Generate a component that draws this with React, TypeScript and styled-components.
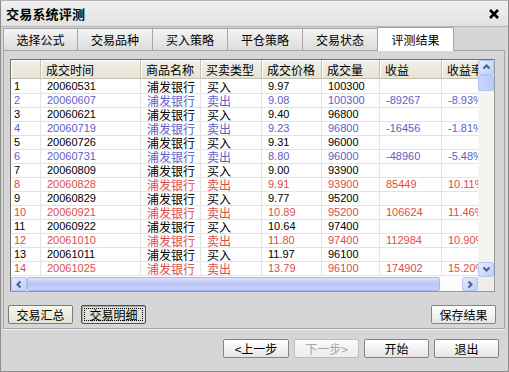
import * as React from 'react'
import styled, { createGlobalStyle, css } from 'styled-components'

/**
 * Data
 */

type Trade = {
    no: number
    date: string
    side: '买入' | '卖出'
    price: string
    volume: string
    gain?: string
    rate?: string
}

const trades: Trade[] = [
    { no: 1, date: '20060531', side: '买入', price: '9.97', volume: '100300' },
    { no: 2, date: '20060607', side: '卖出', price: '9.08', volume: '100300', gain: '-89267', rate: '-8.93%' },
    { no: 3, date: '20060621', side: '买入', price: '9.40', volume: '96800' },
    { no: 4, date: '20060719', side: '卖出', price: '9.23', volume: '96800', gain: '-16456', rate: '-1.81%' },
    { no: 5, date: '20060726', side: '买入', price: '9.31', volume: '96000' },
    { no: 6, date: '20060731', side: '卖出', price: '8.80', volume: '96000', gain: '-48960', rate: '-5.48%' },
    { no: 7, date: '20060809', side: '买入', price: '9.00', volume: '93900' },
    { no: 8, date: '20060828', side: '卖出', price: '9.91', volume: '93900', gain: '85449', rate: '10.11%' },
    { no: 9, date: '20060829', side: '买入', price: '9.77', volume: '95200' },
    { no: 10, date: '20060921', side: '卖出', price: '10.89', volume: '95200', gain: '106624', rate: '11.46%' },
    { no: 11, date: '20060922', side: '买入', price: '10.64', volume: '97400' },
    { no: 12, date: '20061010', side: '卖出', price: '11.80', volume: '97400', gain: '112984', rate: '10.90%' },
    { no: 13, date: '20061011', side: '买入', price: '11.97', volume: '96100' },
    { no: 14, date: '20061025', side: '卖出', price: '13.79', volume: '96100', gain: '174902', rate: '15.20%' },
]

const tabs = ['选择公式', '交易品种', '买入策略', '平仓策略', '交易状态', '评测结果']
const headers = ['', '成交时间', '商品名称', '买卖类型', '成交价格', '成交量', '收益', '收益率']

const rowTone = (t: Trade): Tone => {
    if (t.side === '买入') return 'plain'
    return t.gain && t.gain.startsWith('-') ? 'loss' : 'gain'
}

/**
 * Icons
 */

const Chevron = ({ dir }: { dir: 'up' | 'down' | 'left' | 'right' }) => {
    const paths = {
        up: 'M1.5 5.5 L4.5 2.5 L7.5 5.5',
        down: 'M1.5 2.5 L4.5 5.5 L7.5 2.5',
        left: 'M5.5 1.5 L2.5 4.5 L5.5 7.5',
        right: 'M2.5 1.5 L5.5 4.5 L2.5 7.5',
    }
    return (
        <svg width="9" height="9" viewBox="0 0 9 9">
            <path d={paths[dir]} fill="none" stroke="#4d6185" strokeWidth="2" />
        </svg>
    )
}

const CloseIcon = () => (
    <svg width="12" height="12" viewBox="0 0 12 12">
        <path d="M2 2 L10 10 M10 2 L2 10" stroke="#000" strokeWidth="2.6" />
    </svg>
)

/**
 * Component
 */

export default function App() {
    return (
        <>
            <GlobalStyle />
            <Window>
                <TitleBar>
                    <Title>交易系统评测</Title>
                    <CloseIcon />
                </TitleBar>
                <Body>
                    <TabBar>
                        {tabs.map((t, i) => (
                            <Tab key={t} $active={i === tabs.length - 1}>
                                {t}
                            </Tab>
                        ))}
                    </TabBar>
                    <Panel>
                        <GridFrame>
                            <Viewport>
                                <HeaderRow>
                                    {headers.map((h, i) => (
                                        <HeaderCell key={i}>{h}</HeaderCell>
                                    ))}
                                </HeaderRow>
                                {trades.map(t => {
                                    const tone = rowTone(t)
                                    return (
                                        <DataRow key={t.no} $tone={tone}>
                                            <Cell $num $index>{t.no}</Cell>
                                            <Cell $num>{t.date}</Cell>
                                            <Cell>浦发银行</Cell>
                                            <Cell>{t.side}</Cell>
                                            <Cell $num>{t.price}</Cell>
                                            <Cell $num>{t.volume}</Cell>
                                            <Cell $num>{t.gain}</Cell>
                                            <Cell $num>{t.rate}</Cell>
                                        </DataRow>
                                    )
                                })}
                            </Viewport>
                            <VScroll>
                                <ScrollButton>
                                    <Chevron dir="up" />
                                </ScrollButton>
                                <VThumb />
                                <Track />
                                <ScrollButton>
                                    <Chevron dir="down" />
                                </ScrollButton>
                            </VScroll>
                            <HScroll>
                                <ScrollButton>
                                    <Chevron dir="left" />
                                </ScrollButton>
                                <HThumb />
                                <Track />
                                <ScrollButton>
                                    <Chevron dir="right" />
                                </ScrollButton>
                            </HScroll>
                            <Corner />
                        </GridFrame>
                        <PanelActions>
                            <Group>
                                <Button $variant="panel">交易汇总</Button>
                                <Button $variant="pressed">
                                    <Focus>交易明细</Focus>
                                </Button>
                            </Group>
                            <Button $variant="plain">保存结果</Button>
                        </PanelActions>
                    </Panel>
                    <NavRow>
                        <Button $variant="plain" $wide>&lt;上一步</Button>
                        <Button $variant="disabled">下一步&gt;</Button>
                        <Button $variant="plain">开始</Button>
                        <Button $variant="plain">退出</Button>
                    </NavRow>
                </Body>
            </Window>
        </>
    )
}

/**
 * Styles
 */

type Tone = 'plain' | 'loss' | 'gain'

const toneColors: Record<Tone, string> = {
    plain: '#000000',
    loss: '#5e5ec6',
    gain: '#dc4c4c',
}

const cjk = `"Noto Sans CJK SC", "Liberation Sans", sans-serif`
const columns = '30px 100px 60px 61px 60px 58px 62px 60px'

const GlobalStyle = createGlobalStyle`
    html, body {
        margin: 0;
        padding: 0;
    }
    body {
        background: #d6d6d6;
        font-family: "Liberation Sans", "Noto Sans CJK SC", sans-serif;
        font-size: 12px;
        color: #000;
    }
    * {
        box-sizing: border-box;
    }
`

const Window = styled.div`
    width: 509px;
    height: 372px;
    display: flex;
    flex-direction: column;
    background: #d6d6d6;
    border: 1px solid #8c8c8c;
    border-top-color: #b4b4b4;
`
const TitleBar = styled.div`
    height: 26px;
    flex: none;
    display: flex;
    align-items: center;
    justify-content: space-between;
    padding: 0 8px 0 5px;
    background: linear-gradient(#f0f0f0, #e2e2e2);
    border-bottom: 1px solid #b6b6b6;
`
const Title = styled.div`
    font-family: ${cjk};
    font-size: 13px;
    font-weight: bold;
    letter-spacing: 0.2px;
`
const Body = styled.div`
    padding: 1px 2px 0 2px;
    display: flex;
    flex-direction: column;
`
const TabBar = styled.div`
    display: flex;
    align-items: flex-start;
    height: 22px;
    position: relative;
    z-index: 1;
`
const Tab = styled.div<{ $active?: boolean }>`
    width: 75px;
    height: 22px;
    display: flex;
    align-items: center;
    justify-content: center;
    font-family: ${cjk};
    font-size: 12px;
    border: 1px solid #a6a6a6;
    border-bottom: none;
    border-left-width: 0;
    background: linear-gradient(#f4f4f4, #dcdcdc);
    &:first-child {
        border-left-width: 1px;
    }
    ${p =>
        p.$active &&
        css`
            width: 77px;
            height: 24px;
            margin-top: -1px;
            margin-left: -1px;
            border-left-width: 1px;
            background: #ffffff;
        `}
`
const Panel = styled.div`
    width: 502px;
    height: 279px;
    display: flex;
    flex-direction: column;
    padding: 8px 9px 4px 6px;
    border: 1px solid #a6a6a6;
    box-shadow: 0 1px 0 #f2f2f2;
`
const GridFrame = styled.div`
    height: 233px;
    display: grid;
    grid-template-columns: 1fr 16px;
    grid-template-rows: 1fr 14px;
    border: 1px solid #6e6e6e;
    border-right-color: #9a9a9a;
    border-bottom-color: #9a9a9a;
    background: #ffffff;
`
const Viewport = styled.div`
    overflow: hidden;
    background: #ffffff;
`
const HeaderRow = styled.div`
    display: grid;
    grid-template-columns: ${columns};
    width: max-content;
    height: 19px;
`
const HeaderCell = styled.div`
    display: flex;
    align-items: center;
    padding-left: 5px;
    font-family: ${cjk};
    font-size: 12px;
    white-space: nowrap;
    background: linear-gradient(#f0efe6, #e6e4d6);
    border-right: 1px solid #c2c0b0;
    border-bottom: 1px solid #c2c0b0;
    box-shadow: inset 1px 1px 0 #ffffff;
`
const DataRow = styled.div<{ $tone: Tone }>`
    display: grid;
    grid-template-columns: ${columns};
    width: max-content;
    height: 14px;
    color: ${p => toneColors[p.$tone]};
`
const Cell = styled.div<{ $num?: boolean; $index?: boolean }>`
    display: flex;
    align-items: center;
    padding: ${p => (p.$num ? '1px' : '0')} 0 0 ${p => (p.$index ? '3px' : '6px')};
    font-family: ${p => (p.$num ? '"Liberation Sans", sans-serif' : cjk)};
    font-size: ${p => (p.$num ? '11px' : '12px')};
    line-height: 13px;
    white-space: nowrap;
    border-right: 1px solid #e4e4e4;
    border-bottom: 1px solid #e4e4e4;
`
const VScroll = styled.div`
    display: flex;
    flex-direction: column;
    background: #f4f4f0;
`
const HScroll = styled.div`
    display: flex;
    background: #fcfcfc;
`
const ScrollButton = styled.div`
    width: 16px;
    height: 15px;
    flex: none;
    display: flex;
    align-items: center;
    justify-content: center;
    border: 1px solid #b4c6f2;
    border-radius: 2px;
    background: linear-gradient(135deg, #e4ecfe, #bccefa);
    ${HScroll} & {
        height: 14px;
        width: 16px;
    }
`
const VThumb = styled.div`
    height: 16px;
    flex: none;
    border: 1px solid #b2c4f2;
    border-radius: 2px;
    background: linear-gradient(90deg, #c8d6fe, #b9ccfb);
`
const HThumb = styled.div`
    width: 413px;
    flex: none;
    border: 1px solid #a8b4ee;
    border-radius: 2px;
    background: linear-gradient(#dce2fe, #bcc4f6 45%, #c8d0fa);
`
const Track = styled.div`
    flex: 1;
`
const Corner = styled.div`
    background: #eeede6;
`
const PanelActions = styled.div`
    display: flex;
    justify-content: space-between;
    margin: 13px -1px 0 -2px;
`
const Group = styled.div`
    display: flex;
    gap: 8px;
`
const NavRow = styled.div`
    display: flex;
    justify-content: flex-end;
    gap: 5px;
    margin-top: 10px;
    padding-right: 7px;
`

type Variant = 'panel' | 'pressed' | 'plain' | 'disabled'

const variants: Record<Variant, ReturnType<typeof css>> = {
    panel: css`
        background: linear-gradient(#f8f7ee, #e4e2d0);
        border-color: #7c7c7c;
    `,
    pressed: css`
        background: #e2e0d6;
        border-color: #505050;
        box-shadow: inset 1px 1px 0 #a8a8a0;
    `,
    plain: css`
        background: linear-gradient(#ffffff, #e6e6e6);
        border-color: #858585;
    `,
    disabled: css`
        background: linear-gradient(#fafafa, #ececec);
        border-color: #bdbdbd;
        color: #a6a6a6;
    `,
}

const Button = styled.div<{ $variant: Variant; $wide?: boolean }>`
    width: ${p => (p.$wide ? '66px' : '65px')};
    height: 19px;
    display: flex;
    align-items: center;
    justify-content: center;
    font-family: ${cjk};
    font-size: 12px;
    color: #000;
    border: 1px solid;
    border-radius: 2px;
    ${p => variants[p.$variant]}
`
const Focus = styled.span`
    display: flex;
    align-items: center;
    justify-content: center;
    width: 59px;
    height: 13px;
    border: 1px dotted #000;
`
